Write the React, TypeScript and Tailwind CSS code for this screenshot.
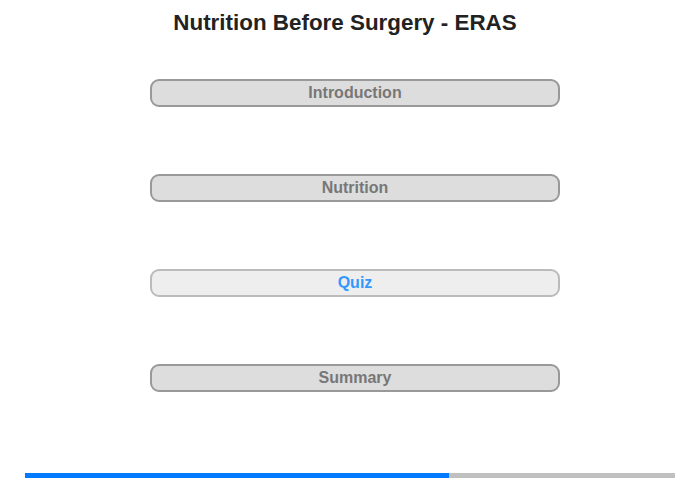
import React from "react";

const items = [
  { label: "Introduction", active: false },
  { label: "Nutrition", active: false },
  { label: "Quiz", active: true },
  { label: "Summary", active: false },
];

export default function App() {
  return (
    <div className="w-[700px] h-[480px] bg-white flex flex-col font-['Liberation_Sans',Arial,sans-serif]">
      <div className="pt-[10px] pr-[10px] h-[34px] text-center text-[22.4px] leading-[25px] font-bold text-[#222]">
        Nutrition Before Surgery - ERAS
      </div>
      <div className="mt-[45px] ml-[150px] w-[410px] flex flex-col gap-[67px]">
        {items.map((it) => (
          <div
            key={it.label}
            className={
              it.active
                ? "h-[28px] rounded-[9px] border-2 border-[#bbbbbb] bg-[#eeeeee] flex items-center justify-center text-[16px] font-bold text-[#3399ff]"
                : "h-[28px] rounded-[9px] border-2 border-[#999999] bg-[#dddddd] flex items-center justify-center text-[16px] font-bold text-[#777777]"
            }
          >
            {it.label}
          </div>
        ))}
      </div>
      <div className="mt-[81px] mx-[25px] h-[5px] flex">
        <div className="w-[424px] h-full bg-[#007bff]" />
        <div className="flex-1 h-full bg-[#c0c0c0]" />
      </div>
    </div>
  );
}
